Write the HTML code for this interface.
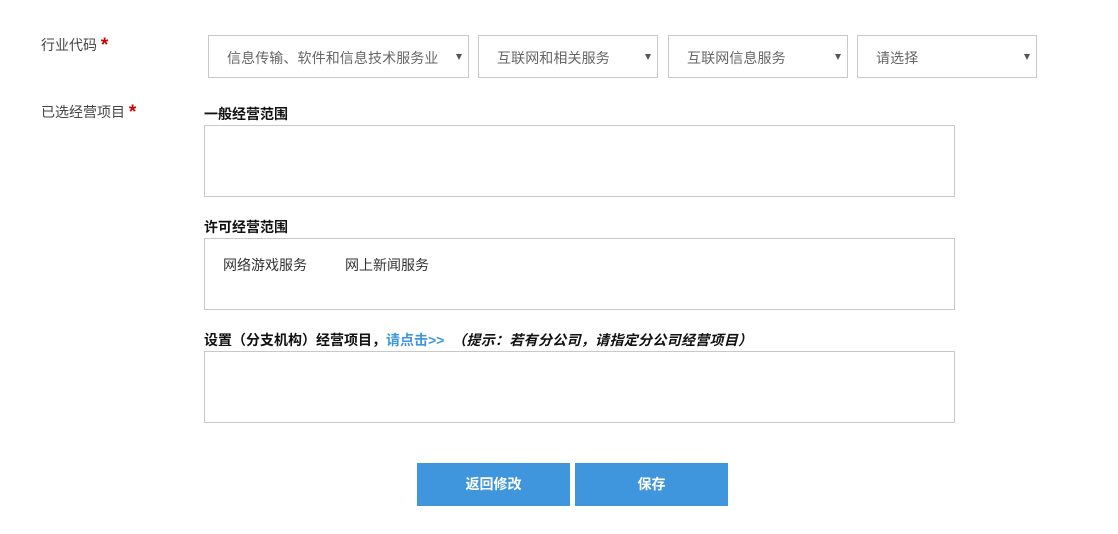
<!DOCTYPE html>
<html><head><meta charset="utf-8"><style>
*{margin:0;padding:0;box-sizing:border-box}
body{width:1118px;height:534px;background:#fff;font-family:"Liberation Sans","Noto Sans CJK SC",sans-serif;font-size:14px;color:#333;position:relative;overflow:hidden}
.a{position:absolute}
.lbl{color:#444}
.star{color:#c00;font-weight:bold;font-size:19px;line-height:14px;vertical-align:-1px}
.sel{position:absolute;top:35px;height:43px;border:1px solid #c8c8c8;color:#666;line-height:44px;padding-left:18px;letter-spacing:0.1px}
.sel:after{content:"";position:absolute;right:6px;top:18px;border-left:3px solid transparent;border-right:3px solid transparent;border-top:6px solid #555}
.h{font-weight:bold;color:#111;font-size:14px}
.box{position:absolute;left:204px;width:751px;height:72px;border:1px solid #c8c8c8}
.btn{position:absolute;top:463px;width:153px;height:43px;background:#4096dd;color:#fff;font-weight:bold;text-align:center;line-height:43px}
</style></head><body>
<div class="a lbl" style="left:41px;top:35px">行业代码 <span class="star">*</span></div>
<div class="a lbl" style="left:41px;top:102px">已选经营项目 <span class="star">*</span></div>
<div class="sel" style="left:208px;width:261px">信息传输、软件和信息技术服务业</div>
<div class="sel" style="left:478px;width:180px">互联网和相关服务</div>
<div class="sel" style="left:668px;width:180px">互联网信息服务</div>
<div class="sel" style="left:857px;width:180px">请选择</div>
<div class="a h" style="left:204px;top:104px">一般经营范围</div>
<div class="box" style="top:125px"></div>
<div class="a h" style="left:204px;top:217px">许可经营范围</div>
<div class="box" style="top:238px"><span class="a" style="left:18px;top:16px">网络游戏服务</span><span class="a" style="left:140px;top:16px">网上新闻服务</span></div>
<div class="a h" style="left:204px;top:330px">设置（分支机构）经营项目，<span style="color:#4096dd">请点击&gt;&gt;</span> &nbsp;<i style="letter-spacing:0.3px">（提示：若有分公司，请指定分公司经营项目）</i></div>
<div class="box" style="top:351px"></div>
<div class="btn" style="left:417px">返回修改</div>
<div class="btn" style="left:575px">保存</div>
</body></html>
